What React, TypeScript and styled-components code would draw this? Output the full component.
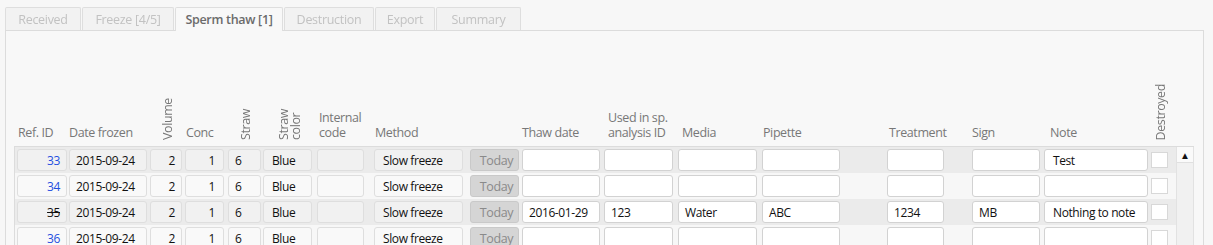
import React from 'react';
import styled, { createGlobalStyle } from 'styled-components';

type Row = {
  id: number;
  destroyed?: boolean;
  thaw?: string;
  used?: string;
  media?: string;
  pipette?: string;
  treatment?: string;
  sign?: string;
  note?: string;
};

const COLUMNS = [52, 81, 35, 43, 35, 54, 57, 96, 52, 82, 74, 84, 125, 85, 72, 107, 19];

const TABS = [
  { label: 'Received', width: 76 },
  { label: 'Freeze [4/5]', width: 92 },
  { label: 'Sperm thaw [1]', width: 108, active: true },
  { label: 'Destruction', width: 90 },
  { label: 'Export', width: 60 },
  { label: 'Summary', width: 85 },
];

const ROWS: Row[] = [
  { id: 33, note: 'Test' },
  { id: 34 },
  {
    id: 35,
    destroyed: true,
    thaw: '2016-01-29',
    used: '123',
    media: 'Water',
    pipette: 'ABC',
    treatment: '1234',
    sign: 'MB',
    note: 'Nothing to note',
  },
  { id: 36 },
];

const GlobalStyle = createGlobalStyle`
  body {
    margin: 0;
    background: #f7f7f7;
    font-family: 'Open Sans', 'Noto Sans', sans-serif;
    font-size: 12px;
    letter-spacing: -0.4px;
    color: #111;
  }
`;

const App = () => {
  return (
    <Page>
      <GlobalStyle />
      <TabBar>
        {TABS.map((t) => (
          <Tab key={t.label} $width={t.width} $active={!!t.active}>
            {t.label}
          </Tab>
        ))}
      </TabBar>
      <Panel>
        <HeaderGrid>
          <Label $indent={1}>Ref. ID</Label>
          <Label>Date frozen</Label>
          <VLabel>Volume</VLabel>
          <Label $indent={1}>Conc</Label>
          <VLabel>Straw</VLabel>
          <VLabel>
            Straw
            <br />
            color
          </VLabel>
          <Label $indent={2}>
            Internal
            <br />
            code
          </Label>
          <Label $indent={1}>Method</Label>
          <span />
          <Label>Thaw date</Label>
          <Label $indent={4}>
            Used in sp.
            <br />
            analysis ID
          </Label>
          <Label $indent={4}>Media</Label>
          <Label $indent={1}>Pipette</Label>
          <Label $indent={2}>Treatment</Label>
          <Label>Sign</Label>
          <Label $indent={6}>Note</Label>
          <VLabel>Destroyed</VLabel>
        </HeaderGrid>
        <Body>
          <Rows>
            {ROWS.map((r, i) => (
              <RowGrid key={r.id} $shaded={i % 2 === 0}>
                <ReadCell $w={50} $right>
                  <RefId $destroyed={!!r.destroyed}>{r.id}</RefId>
                </ReadCell>
                <ReadCell $w={78}>2015-09-24</ReadCell>
                <ReadCell $w={32} $right>
                  2
                </ReadCell>
                <ReadCell $w={39} $right $pad={8}>
                  1
                </ReadCell>
                <ReadCell $w={33}>6</ReadCell>
                <ReadCell $w={49} $pad={8}>
                  Blue
                </ReadCell>
                <ReadCell $w={47} />
                <ReadCell $w={89} $pad={8}>
                  Slow freeze
                </ReadCell>
                <TodayButton>Today</TodayButton>
                <Input $w={78}>{r.thaw}</Input>
                <Input $w={69}>{r.used}</Input>
                <Input $w={79}>{r.media}</Input>
                <Input $w={78}>{r.pipette}</Input>
                <Input $w={57}>{r.treatment}</Input>
                <Input $w={68}>{r.sign}</Input>
                <Input $w={104} $pad={8}>
                  {r.note}
                </Input>
                <Check />
              </RowGrid>
            ))}
          </Rows>
          <Scrollbar>
            <ScrollButton>▲</ScrollButton>
          </Scrollbar>
        </Body>
      </Panel>
    </Page>
  );
};

const Page = styled.div`
  padding: 6px 0 0 5px;
  width: 1199px;
  height: 239px;
  overflow: hidden;
`;

const TabBar = styled.div`
  display: flex;
  align-items: flex-end;
  gap: 1px;
  height: 24px;
`;

const Tab = styled.div<{ $width: number; $active: boolean }>`
  width: ${({ $width }) => $width}px;
  height: ${({ $active }) => ($active ? 24 : 23)}px;
  box-sizing: border-box;
  display: flex;
  align-items: center;
  justify-content: center;
  border: 1px solid #dedede;
  border-bottom: none;
  border-radius: 2px 2px 0 0;
  background: ${({ $active }) => ($active ? '#f8f8f8' : '#f2f2f2')};
  color: ${({ $active }) => ($active ? '#6b6b6b' : '#c2c2c2')};
  font-weight: ${({ $active }) => ($active ? 600 : 400)};
  font-size: 12.5px;
  letter-spacing: -0.3px;
  position: relative;
  z-index: ${({ $active }) => ($active ? 1 : 0)};
  margin-bottom: ${({ $active }) => ($active ? -1 : 0)}px;
  filter: ${({ $active }) => ($active ? 'none' : 'blur(0.6px)')};
`;

const Panel = styled.div`
  border: 1px solid #dcdcdc;
  border-bottom: none;
  background: #f8f8f8;
  padding: 0 9px 0 8px;
  height: 240px;
`;

const HeaderGrid = styled.div`
  display: grid;
  grid-template-columns: ${COLUMNS.map((c) => `${c}px`).join(' ')};
  align-items: end;
  height: 115px;
  padding: 0 0 6px 3px;
  box-sizing: border-box;
  color: #777;
  font-size: 12.5px;
`;

const Label = styled.div<{ $indent?: number }>`
  padding-left: ${({ $indent }) => $indent || 0}px;
  line-height: 15px;
  white-space: nowrap;
`;

const VLabel = styled.div`
  justify-self: center;
  writing-mode: vertical-rl;
  transform: rotate(180deg);
  line-height: 12px;
  white-space: nowrap;
  text-align: start;
`;

const Body = styled.div`
  display: flex;
  width: 1179px;
  border-top: 1px solid #dcdcdc;
  border-left: 1px solid #dcdcdc;
`;

const Rows = styled.div`
  flex: 1;
  display: flex;
  flex-direction: column;
`;

const RowGrid = styled.div<{ $shaded: boolean }>`
  display: grid;
  grid-template-columns: ${COLUMNS.map((c) => `${c}px`).join(' ')};
  align-items: center;
  height: 26px;
  padding-left: 2px;
  background: ${({ $shaded }) => ($shaded ? '#ebebeb' : '#f7f7f7')};
`;

const ReadCell = styled.div<{ $w: number; $right?: boolean; $pad?: number }>`
  width: ${({ $w }) => $w}px;
  height: 22px;
  box-sizing: border-box;
  border: 1px solid #dedede;
  border-radius: 3px;
  background: rgba(255, 255, 255, 0.3);
  display: flex;
  align-items: center;
  justify-content: ${({ $right }) => ($right ? 'flex-end' : 'flex-start')};
  padding: 0 ${({ $pad }) => $pad || 6}px;
  white-space: nowrap;
`;

const RefId = styled.span<{ $destroyed: boolean }>`
  color: ${({ $destroyed }) => ($destroyed ? '#111' : '#1f4fe0')};
  text-decoration: ${({ $destroyed }) => ($destroyed ? 'line-through' : 'none')};
`;

const TodayButton = styled.div`
  width: 49px;
  height: 22px;
  box-sizing: border-box;
  border: 1px solid #c9c9c9;
  border-radius: 3px;
  background: #d5d5d5;
  color: #8a8a8a;
  display: flex;
  align-items: center;
  justify-content: center;
  padding-left: 4px;
  font-size: 12.5px;
`;

const Input = styled.div<{ $w: number; $pad?: number }>`
  width: ${({ $w }) => $w}px;
  height: 22px;
  box-sizing: border-box;
  border: 1px solid #d2d2d2;
  border-radius: 3px;
  background: #fff;
  display: flex;
  align-items: center;
  padding: 0 ${({ $pad }) => $pad || 6}px;
  white-space: nowrap;
  overflow: hidden;
`;

const Check = styled.div`
  width: 17px;
  height: 16px;
  box-sizing: border-box;
  border: 1px solid #d8d8d8;
  background: #fff;
`;

const Scrollbar = styled.div`
  width: 16px;
  border-left: 1px solid #e2e2e2;
  border-right: 1px solid #e2e2e2;
  background: #f1f1f1;
  height: 100px;
`;

const ScrollButton = styled.div`
  height: 15px;
  border-bottom: 1px solid #e0e0e0;
  background: #fafafa;
  display: flex;
  align-items: center;
  justify-content: center;
  font-size: 10px;
  letter-spacing: 0;
  color: #111;
`;

export default App;
